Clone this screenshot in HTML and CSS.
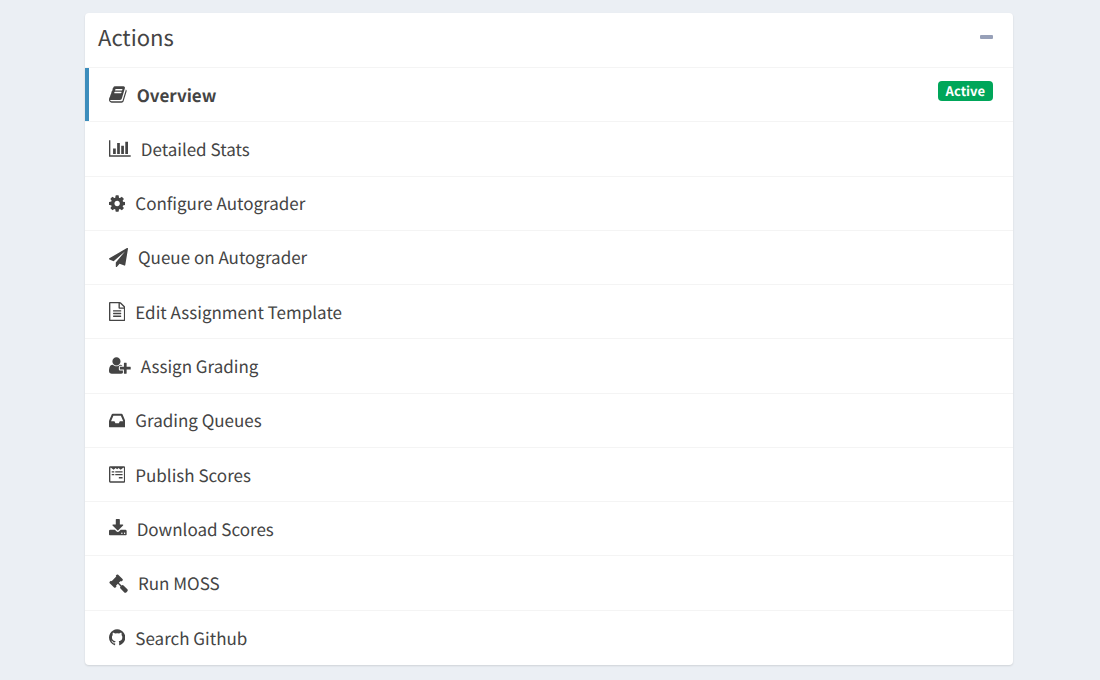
FILE: index.html
```html
<!DOCTYPE html>
<html lang="en">
<head>
<meta charset="utf-8">
<meta name="viewport" content="width=device-width, initial-scale=1">
<title>Actions</title>
<link rel="stylesheet" href="styles.css">
</head>
<body>
<main class="box">
  <header class="box-header">
    <h1 class="box-title">Actions</h1>
    <button class="collapse" type="button" aria-label="Collapse"><span class="collapse-bar"></span></button>
  </header>
  <ul class="menu">
    <li class="menu-item"><a class="menu-link active" href="#">
      <svg class="icon" viewBox="64 0 1664 1792" aria-hidden="true"><path d="M1703 478q40 57 18 129l-275 906q-19 64-76.500 107.500t-122.500 43.500h-923q-77 0-148.500-53.500t-99.500-131.500q-24-67-2-127 0-4 3-27t4-37q1-8-3-21.500t-3-19.500q2-11 8-21t16.500-23.500 16.500-23.500q23-38 45-91.500t30-91.500q3-10 .5-30t-.5-28q3-11 17-28t17-23q21-36 42-92t25-90q1-9-2.500-32t.5-28q4-13 22-30.500t22-22.500q19-26 42.500-84.500t27.500-96.500q1-8-3-25.500t-2-26.500q2-8 9-18t18-23 17-21q8-12 16.500-30.500t15-35 16-36 19.500-32 26.500-23.500 36-11.500 47.500 5.500l-1 3q38-9 51-9h761q74 0 114 56t18 130l-274 906q-36 119-71.500 153.500t-128.500 34.500h-869q-27 0-38 15-11 16-1 43 24 70 144 70h923q29 0 56-15.500t35-41.500l300-987q7-22 5-57 38 15 59 43zm-1064 2q-4 13 2 22.500t20 9.500h608q13 0 25.500-9.500t16.500-22.500l21-64q4-13-2-22.500t-20-9.500h-608q-13 0-25.500 9.500t-16.500 22.500zm-83 256q-4 13 2 22.500t20 9.500h608q13 0 25.500-9.500t16.500-22.500l21-64q4-13-2-22.500t-20-9.500h-608q-13 0-25.500 9.500t-16.500 22.500z"/></svg>
      <span class="label">Overview</span>
      <span class="badge">Active</span></a></li>
    <li class="menu-item"><a class="menu-link" href="#">
      <svg class="icon" viewBox="0 0 2048 1792" aria-hidden="true"><path d="M640 896v512h-256v-512h256zm384-512v1024h-256v-1024h256zm1024 1152v128h-2048v-1536h128v1408h1920zm-640-896v768h-256v-768h256zm384-384v1152h-256v-1152h256z"/></svg>
      <span class="label">Detailed Stats</span></a></li>
    <li class="menu-item"><a class="menu-link" href="#">
      <svg class="icon" viewBox="128 0 1536 1792" aria-hidden="true"><path d="M1152 896q0-106-75-181t-181-75-181 75-75 181 75 181 181 75 181-75 75-181zm512-109v222q0 12-8 23t-20 13l-185 28q-19 54-39 91 35 50 107 138 10 12 10 25t-9 23q-27 37-99 108t-94 71q-12 0-26-9l-138-108q-44 23-91 38-16 136-29 186-7 28-36 28h-222q-14 0-24.500-8.500t-11.500-21.500l-28-184q-49-16-90-37l-141 107q-10 9-25 9-14 0-25-11-126-114-165-168-7-10-7-23 0-12 8-23 15-21 51-66.500t54-70.500q-27-50-41-99l-183-27q-13-2-21-12.500t-8-23.500v-222q0-12 8-23t19-13l186-28q14-46 39-92-40-57-107-138-10-12-10-24 0-10 9-23 26-36 98.500-107.500t94.500-71.500q13 0 26 10l138 107q44-23 91-38 16-136 29-186 7-28 36-28h222q14 0 24.500 8.500t11.500 21.500l28 184q49 16 90 37l142-107q9-9 24-9 13 0 25 10 129 119 165 170 7 8 7 22 0 12-8 23-15 21-51 66.500t-54 70.500q26 50 41 98l183 28q13 2 21 12.500t8 23.500z"/></svg>
      <span class="label">Configure Autograder</span></a></li>
    <li class="menu-item"><a class="menu-link" href="#">
      <svg class="icon" viewBox="0 0 1792 1792" aria-hidden="true"><path d="M1764 11q33 24 27 64l-256 1536q-5 29-32 45-14 8-31 8-11 0-24-5l-453-185-242 295q-18 23-49 23-13 0-22-4-19-7-30.500-23.500t-11.500-36.500v-349l864-1059-1069 925-395-162q-37-14-40-55-2-40 32-59l1664-960q15-9 32-9 20 0 36 11z"/></svg>
      <span class="label">Queue on Autograder</span></a></li>
    <li class="menu-item"><a class="menu-link" href="#">
      <svg class="icon" viewBox="128 0 1536 1792" aria-hidden="true"><path d="M1596 380q28 28 48 76t20 88v1152q0 40-28 68t-68 28h-1344q-40 0-68-28t-28-68v-1600q0-40 28-68t68-28h896q40 0 88 20t76 48zm-444-244v376h376q-10-29-22-41l-313-313q-12-12-41-22zm384 1528v-1024h-416q-40 0-68-28t-28-68v-416h-768v1536h1280zm-1024-864q0-14 9-23t23-9h704q14 0 23 9t9 23v64q0 14-9 23t-23 9h-704q-14 0-23-9t-9-23v-64zm736 224q14 0 23 9t9 23v64q0 14-9 23t-23 9h-704q-14 0-23-9t-9-23v-64q0-14 9-23t23-9h704zm0 256q14 0 23 9t9 23v64q0 14-9 23t-23 9h-704q-14 0-23-9t-9-23v-64q0-14 9-23t23-9h704z"/></svg>
      <span class="label">Edit Assignment Template</span></a></li>
    <li class="menu-item"><a class="menu-link" href="#">
      <svg class="icon" viewBox="0 0 2048 1792" aria-hidden="true"><path d="M704 896q-159 0-271.500-112.500t-112.500-271.500 112.500-271.500 271.500-112.500 271.500 112.500 112.500 271.500-112.500 271.500-271.500 112.500zm960 128h352q13 0 22.500 9.500t9.500 22.500v192q0 13-9.500 22.500t-22.500 9.500h-352v352q0 13-9.500 22.500t-22.500 9.500h-192q-13 0-22.500-9.500t-9.500-22.500v-352h-352q-13 0-22.500-9.500t-9.500-22.500v-192q0-13 9.500-22.500t22.500-9.500h352v-352q0-13 9.500-22.500t22.500-9.500h192q13 0 22.500 9.500t9.500 22.500v352zm-736 224q0 52 38 90t90 38h256v238q-68 50-171 50h-874q-121 0-194-69t-73-190q0-53 3.500-103.500t14-109 26.500-108.500 43-97.500 62-81 85.500-53.500 111.500-20q19 0 39 17 79 61 154.500 91.500t164.500 30.500 164.500-30.500 154.500-91.500q20-17 39-17 132 0 217 96h-223q-52 0-90 38t-38 90v192z"/></svg>
      <span class="label">Assign Grading</span></a></li>
    <li class="menu-item"><a class="menu-link" href="#">
      <svg class="icon" viewBox="128 0 1536 1792" aria-hidden="true"><path d="M1151 960h316q-1-3-2.500-8t-2.500-8l-212-496h-708l-212 496q-1 2-2.500 8t-2.500 8h316l95 192h320zm513 30v482q0 26-19 45t-45 19h-1408q-26 0-45-19t-19-45v-482q0-62 25-123l238-552q10-25 36.500-42t52.500-17h832q26 0 52.500 17t36.500 42l238 552q25 61 25 123z"/></svg>
      <span class="label">Grading Queues</span></a></li>
    <li class="menu-item"><a class="menu-link" href="#">
      <svg class="icon" viewBox="128 0 1536 1792" aria-hidden="true"><path fill-rule="evenodd" d="M248 128h1296q120 0 120 120v1296q0 120-120 120h-1296q-120 0-120-120v-1296q0-120 120-120zm8 128v1280h1280v-1280h-60l-250 190-190-170-140 120-140-120-190 170-250-190z"/><path d="M384 592h240v110h-240zm336 0h688v110h-688zm-336 260h240v110h-240zm336 0h688v110h-688zm336 270h352v140h-352z"/></svg>
      <span class="label">Publish Scores</span></a></li>
    <li class="menu-item"><a class="menu-link" href="#">
      <svg class="icon" viewBox="64 0 1664 1792" aria-hidden="true"><path d="M1344 1344q0-26-19-45t-45-19-45 19-19 45 19 45 45 19 45-19 19-45zm256 0q0-26-19-45t-45-19-45 19-19 45 19 45 45 19 45-19 19-45zm128-224v320q0 40-28 68t-68 28h-1472q-40 0-68-28t-28-68v-320q0-40 28-68t68-28h465l135 136q58 56 136 56t136-56l136-136h464q40 0 68 28t28 68zm-325-569q17 41-14 70l-448 448q-18 19-45 19t-45-19l-448-448q-31-29-14-70 17-39 59-39h256v-448q0-26 19-45t45-19h256q26 0 45 19t19 45v448h256q42 0 59 39z"/></svg>
      <span class="label">Download Scores</span></a></li>
    <li class="menu-item"><a class="menu-link" href="#">
      <svg class="icon" viewBox="0 0 1792 1792" aria-hidden="true"><path d="M1771 1536q0 53-37 90l-107 108q-39 37-91 37-53 0-90-37l-363-364q-38-36-38-90 0-53 43-96l-256-256-126 126q-14 14-34 14t-34-14q2 2 12.500 12t12.500 13 10 11.500 10 13.500 6 13.500 5.500 16.500 1.500 18q0 38-28 68-3 3-16.500 18t-19 20.500-18.500 16.500-22 15.500-22 9-26 4.500q-40 0-68-28l-408-408q-28-28-28-68 0-13 4.500-26t9-22 15.500-22 16.500-18.500 20.500-19 18-16.500q30-28 68-28 10 0 18 1.500t16.500 5.500 13.500 6 13.500 10 11.500 10 13 12.500 12 12.500q-14-14-14-34t14-34l348-348q14-14 34-14t34 14q-2-2-12.500-12t-12.500-13-10-11.500-10-13.500-6-13.500-5.500-16.500-1.500-18q0-38 28-68 3-3 16.500-18t19-20.500 18.500-16.500 22-15.500 22-9 26-4.500q40 0 68 28l408 408q28 28 28 68 0 13-4.500 26t-9 22-15.500 22-16.500 18.500-20.500 19-18 16.500q-30 28-68 28-10 0-18-1.500t-16.500-5.500-13.500-6-13.500-10-11.500-10-13-12.500-12-12.500q14 14 14 34t-14 34l-126 126 256 256q43-43 96-43 52 0 91 37l363 363q37 39 37 91z"/></svg>
      <span class="label">Run MOSS</span></a></li>
    <li class="menu-item"><a class="menu-link" href="#">
      <svg class="icon" viewBox="128 0 1536 1792" aria-hidden="true"><path d="M896 128q209 0 385.500 103t279.500 279.500 103 385.500q0 251-146.500 451.500t-378.500 277.500q-27 5-40-7t-13-30q0-3 .5-76.500t.5-134.500q0-97-52-142 57-6 102.500-18t94-39 81-66.500 53-105 20.500-150.500q0-119-79-206 37-91-8-204-28-9-81 11t-92 44l-38 24q-93-26-192-26t-192 26q-16-11-42.500-27t-83.500-38.500-85-13.500q-45 113-8 204-79 87-79 206 0 85 20.500 150t52.500 105 80.500 67 94 39 102.500 18q-39 36-49 103-21 10-45 15t-57 5-65.500-21.500-55.500-62.500q-19-32-48.500-52t-49.500-24l-20-3q-21 0-29 4.500t-5 11.500 9 14 13 12l7 5q22 10 43.500 38t31.500 51l10 23q13 38 44 61.500t67 30 69.500 7 55.500-3.500l23-4q0 38 .5 88.500t.5 54.500q0 18-13 30t-40 7q-232-77-378.500-277.500t-146.500-451.500q0-209 103-385.500t279.500-279.500 385.500-103z"/></svg>
      <span class="label">Search Github</span></a></li>
  </ul>
</main>
</body>
</html>
```
FILE: styles.css
```css
* {
  box-sizing: border-box;
}

body {
  display: flex;
  min-height: 100vh;
  margin: 0;
  padding: 13px 87px 15px 85px;
  background: #ebeff4;
  color: #444;
  font-family: "Noto Sans CJK SC", "Noto Sans", sans-serif;
  font-size: 17px;
  line-height: 24px;
  text-rendering: geometricPrecision;
}

.box {
  display: flex;
  flex: 1;
  flex-direction: column;
  overflow: hidden;
  border-radius: 4px;
  background: #fff;
  box-shadow: 0 1px 2px rgba(0, 0, 0, 0.12);
}

.box-header {
  display: flex;
  align-items: flex-start;
  justify-content: space-between;
  padding: 8px 20px 14px 13px;
  border-bottom: 1px solid #f4f4f4;
}

.box-title {
  margin: 0;
  font-size: 22px;
  font-weight: 400;
  line-height: 32px;
}

.collapse {
  display: flex;
  padding: 14px 0;
  border: 0;
  background: none;
  cursor: pointer;
}

.collapse-bar {
  width: 13px;
  height: 4px;
  border-radius: 1px;
  background: #97a0b8;
}

.menu {
  display: grid;
  flex: 1;
  grid-auto-rows: 1fr;
  margin: 0;
  padding: 0;
  list-style: none;
}

.menu-item {
  display: flex;
  border-bottom: 1px solid #f4f4f4;
}

.menu-item:last-child {
  border-bottom: 0;
}

.menu-link {
  display: flex;
  flex: 1;
  align-items: center;
  gap: 10px;
  padding: 13px 20px;
  border-left: 4px solid transparent;
  color: inherit;
  text-decoration: none;
}

.active {
  border-left-color: #3c8dbc;
  font-weight: 700;
}

.icon {
  height: 19px;
  fill: currentColor;
}

.badge {
  align-self: flex-start;
  margin-left: auto;
  padding: 0 8px;
  border-radius: 4px;
  background: #00a65a;
  color: #fff;
  font-size: 13px;
  line-height: 20px;
}
```
